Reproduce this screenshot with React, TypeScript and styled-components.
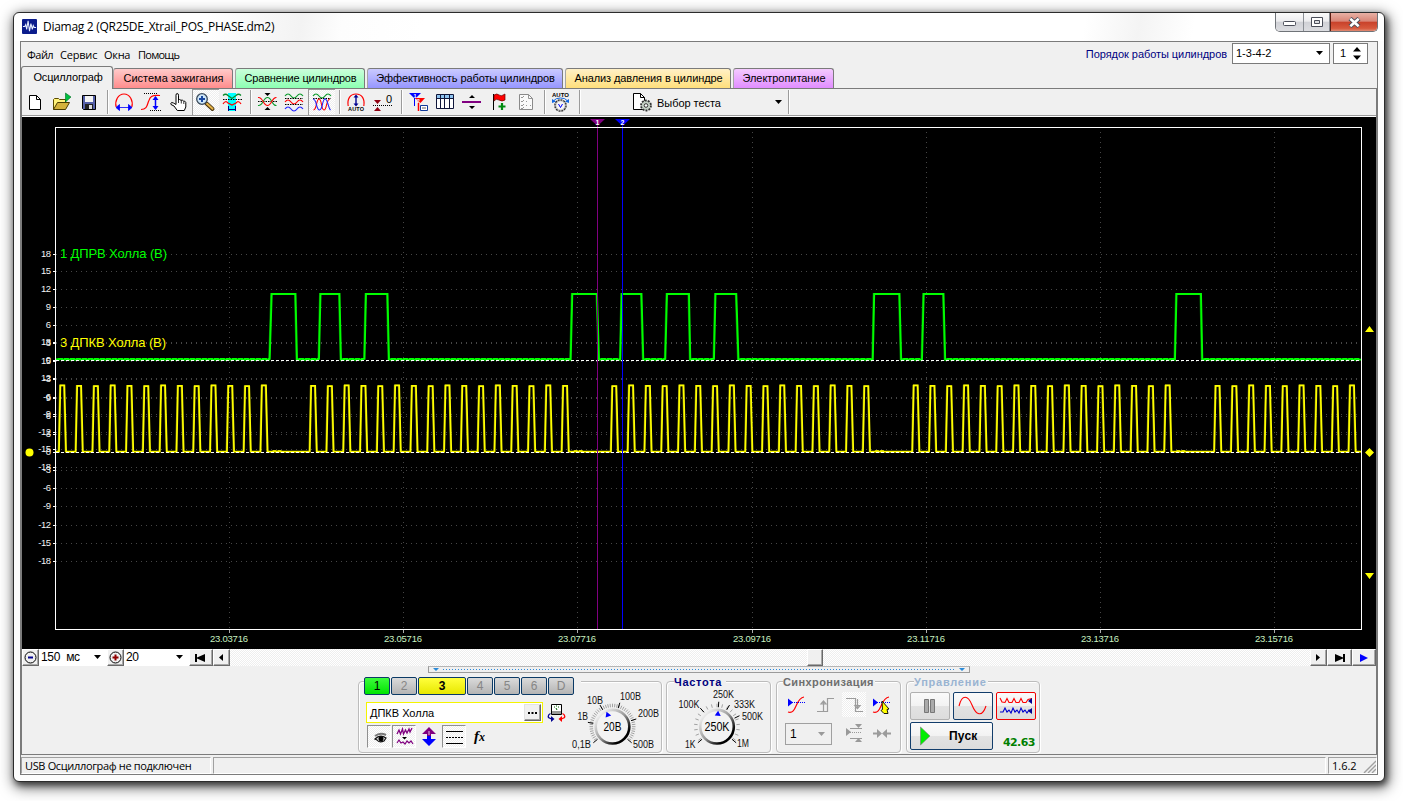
import React from "react";
import styled, { createGlobalStyle, css } from "styled-components";

const UI = `"Liberation Sans", Arial, sans-serif`;
const SEGOE = `"Open Sans", "Noto Sans", sans-serif`;
const dither = `repeating-conic-gradient(#ffffff 0 25%, #eeeeee 0 50%) 0 0 / 2px 2px`;

const Global = createGlobalStyle`
  html, body { margin: 0; padding: 0; background: #fff; }
  body { width: 1403px; height: 801px; overflow: hidden; font: 11px ${UI}; color: #000; }
  * { box-sizing: border-box; }
  svg { display: block; flex: none; }
  svg text { font-family: ${UI}; }
`;

/* ---------- window frame ---------- */

const Desktop = styled.div`
  width: 1403px;
  height: 801px;
  padding: 12px 18px 19px 13px;
  overflow: hidden;
`;

const WindowFrame = styled.div`
  width: 1372px;
  height: 770px;
  border: 1px solid #2c2c2c;
  border-radius: 6px;
  padding: 0 6px 6px;
  background: linear-gradient(100deg, #fff 0 14%, #f3f3f3 21%, #fdfdfd 24%, #fff 30% 78%, #f4f4f4 82%, #fff 86%) 0 0 / 100% 28px no-repeat,
    #fdfdfd;
  box-shadow: 2px 3px 6px rgba(0, 0, 0, 0.6), 2px 4px 14px 2px rgba(0, 0, 0, 0.55);
`;

const TitleBar = styled.header`
  display: flex;
  height: 28px;
  align-items: flex-start;
`;

const AppIcon = styled.div`
  margin: 6px 0 0 2px;
`;

const Title = styled.div`
  margin: 4px 0 0 6px;
  font: 12px/20px ${SEGOE};
  letter-spacing: -0.28px;
  white-space: nowrap;
  flex: 1;
`;

const CaptionButtons = styled.div`
  display: flex;
  width: 103px;
  height: 19px;
  border: 1px solid #6f7378;
  border-top: 0;
  border-radius: 0 0 5px 5px;
  overflow: hidden;
`;

const CaptionButton = styled.div<{ $w: number; $close?: boolean; $drop?: number }>`
  width: ${(p) => p.$w}px;
  display: flex;
  align-items: center;
  justify-content: center;
  padding-top: ${(p) => p.$drop ?? 0}px;
  border-left: ${(p) => (p.$close ? "1px solid #5c1d12" : "0")};
  border-right: ${(p) => (p.$close ? "0" : "1px solid #8b8f95")};
  background: ${(p) =>
    p.$close
      ? "linear-gradient(#e8b1a5 0, #d98576 46%, #c8412a 50%, #d7593d 85%, #e08a72 100%)"
      : "linear-gradient(#fbfbfb 0, #ececee 46%, #d0d1d6 50%, #dcdde1 100%)"};
`;

const Client = styled.div`
  width: 1358px;
  height: 734px;
  border: 1px solid #7b7b7b;
  background: #f0f0f0;
  display: flex;
  flex-direction: column;
`;

/* ---------- menu ---------- */

const MenuRow = styled.div`
  height: 24px;
  display: flex;
  align-items: flex-start;
  padding: 1px 9px 0 6px;
`;

const MenuItem = styled.span<{ $w: number; $ls?: number }>`
  width: ${(p) => p.$w}px;
  font: 11px/24px ${SEGOE};
  letter-spacing: ${(p) => p.$ls ?? 0}px;
  white-space: nowrap;
`;

const OrderLabel = styled.span`
  margin-left: auto;
  margin-right: 5px;
  line-height: 22px;
  letter-spacing: -0.05px;
  color: #000080;
`;

const Field = styled.div<{ $w: number; $h?: number; $muted?: boolean }>`
  width: ${(p) => p.$w}px;
  height: ${(p) => p.$h ?? 21}px;
  border: 1px solid ${(p) => (p.$muted ? "#a0a0a0" : "#7a7a7a")};
  background: ${(p) => (p.$muted ? "#f0f0f0" : "#fff")};
  display: flex;
  align-items: center;
  justify-content: space-between;
  padding: 0 6px 0 3px;
`;

const OrderField = styled(Field)`
  margin-right: 3px;
  padding-bottom: 1px;
`;

const SpinField = styled(Field)`
  padding: 0 6px 1px 6px;
`;

/* ---------- tabs ---------- */

const TabRow = styled.div`
  height: 22px;
  display: flex;
  align-items: flex-end;
`;

const Tab = styled.div<{ $w: number; $bg: string; $active?: boolean; $ls?: number }>`
  width: ${(p) => p.$w}px;
  height: ${(p) => (p.$active ? 23 : 20)}px;
  margin-bottom: ${(p) => (p.$active ? -1 : 0)}px;
  margin-right: ${(p) => (p.$active ? 0 : 2)}px;
  padding: ${(p) => (p.$active ? "1px 0 0 2px" : "0 0 0 1px")};
  border: 1px solid #7b7b7b;
  border-bottom: 0;
  border-left-color: ${(p) => (p.$active ? "#7b7b7b" : "#a5a5a5")};
  border-radius: 3px 3px 0 0;
  background: ${(p) => p.$bg};
  text-align: center;
  line-height: 19px;
  letter-spacing: ${(p) => p.$ls ?? 0}px;
  white-space: nowrap;
  z-index: 1;
`;

const Page = styled.main`
  height: 667px;
  border: 1px solid #7b7b7b;
  display: flex;
  flex-direction: column;
`;

/* ---------- toolbar ---------- */

const Toolbar = styled.div`
  height: 28px;
  display: flex;
  border-bottom: 1px solid #fff;
  box-shadow: inset 0 -1px #9b9b9b;
`;

const ToolButton = styled.div<{ $pressed?: boolean }>`
  width: 27px;
  height: 26px;
  padding: 3px;
  ${(p) =>
    p.$pressed &&
    css`
      background: ${dither};
      border-left: 1px solid #9a9a9a;
      border-top: 1px solid #9a9a9a;
      padding: 2px;
    `}
`;

const Separator = styled.div`
  width: 8px;
  height: 24px;
  margin-top: 1px;
  background: linear-gradient(90deg, transparent 4px, #9b9b9b 4px 5px, #fff 5px 6px, transparent 6px);
`;

const TestPicker = styled.div`
  width: 201px;
  height: 26px;
  display: flex;
  align-items: center;
  padding-left: 47px;
`;

const TestLabel = styled.span`
  width: 118px;
  padding-top: 1px;
  margin-left: 5px;
  letter-spacing: -0.05px;
`;

/* ---------- scroll row ---------- */

const NavRow = styled.div`
  height: 17px;
  display: flex;
`;

const Raised = styled.div<{ $w: number }>`
  width: ${(p) => p.$w}px;
  height: 17px;
  background: #f0f0f0;
  border: 1px solid #fff;
  border-right-color: #696969;
  border-bottom-color: #696969;
  box-shadow: inset -1px -1px #a8a8a8;
  display: flex;
  align-items: center;
  justify-content: center;
  padding-right: 1px;
`;

const Combo = styled.div<{ $w: number }>`
  width: ${(p) => p.$w}px;
  height: 17px;
  background: #fff;
  display: flex;
  align-items: center;
  justify-content: space-between;
  padding: 0 6px 1px 2px;
  font-size: 12px;
  letter-spacing: -0.3px;
  word-spacing: 3px;
`;

const Track = styled.div`
  flex: 1;
  background: ${dither};
  padding-left: 577px;
`;

/* ---------- control area ---------- */

const Controls = styled.section`
  height: 88px;
  background: #f0f0f0;
`;

const Splitter = styled.div`
  width: 542px;
  height: 7px;
  margin-left: 406px;
  border: 1px solid #9b9b9b;
  border-top-color: #b5b5b5;
`;

const Groups = styled.div`
  display: flex;
  margin: 8px 0 0 336px;
  height: 72px;
`;

const Group = styled.div<{ $w: number; $gap?: number }>`
  width: ${(p) => p.$w}px;
  height: 72px;
  margin-right: ${(p) => p.$gap ?? 5}px;
  border: 1px solid #bcbcbc;
  border-radius: 4px;
  box-shadow: 1px 1px #fff, inset 1px 1px #fff;
`;

const ChannelGroup = styled(Group)`
  display: flex;
`;

const GroupTitle = styled.div<{ $w: number; $x: number; $color: string; $ls: number }>`
  width: ${(p) => p.$w}px;
  height: 14px;
  margin: -7px 0 0 ${(p) => p.$x}px;
  background: #f0f0f0;
  color: ${(p) => p.$color};
  font: bold 11px/15px ${UI};
  letter-spacing: ${(p) => p.$ls}px;
  white-space: nowrap;
`;

const ChannelSide = styled.div`
  width: 211px;
`;

const ChannelStrip = styled.div`
  display: flex;
  gap: 1px;
  width: 217px;
  margin: -5px 0 0 5px;
  background: #f0f0f0;
`;

const tones = {
  green: ["linear-gradient(#3dfb3d, #00e400)", "#000"],
  yellow: ["linear-gradient(#ffff3c, #e8e800)", "#000"],
  gray: ["linear-gradient(#dadada, #b4b4b4)", "#868686"],
} as const;

const ChannelButton = styled.div<{ $w: number; $tone: keyof typeof tones; $bold?: boolean }>`
  width: ${(p) => p.$w}px;
  height: 18px;
  border: 1px solid #0b3a66;
  border-radius: 2px;
  background: ${(p) => tones[p.$tone][0]};
  color: ${(p) => tones[p.$tone][1]};
  font: ${(p) => (p.$bold ? "bold" : "normal")} 12px/16px ${UI};
  text-align: center;
`;

const NameRow = styled.div`
  display: flex;
  gap: 4px;
  margin: 7px 0 0 7px;
`;

const NameInput = styled.div`
  width: 177px;
  height: 21px;
  border: 1px solid #f4f400;
  background: #fff;
  display: flex;
  align-items: center;
  justify-content: space-between;
  padding: 0 1px 0 3px;
`;

const More = styled.div`
  width: 17px;
  height: 17px;
  background: #f0f0f0;
  border: 1px solid #e3e3e3;
  border-right-color: #696969;
  border-bottom-color: #696969;
  box-shadow: inset -1px -1px #a0a0a0;
  display: flex;
  align-items: center;
  justify-content: center;
`;

const ToggleRow = styled.div`
  display: flex;
  gap: 1px;
  margin: 2px 0 0 8px;
`;

const Toggle = styled.div<{ $on?: boolean }>`
  width: 24px;
  height: 23px;
  padding: ${(p) => (p.$on ? "0" : "1px")};
  ${(p) =>
    p.$on &&
    css`
      background: ${dither};
      border: 1px solid #8f8f8f;
      border-right-color: #fff;
      border-bottom-color: #fff;
    `}
`;

const Fx = styled.span`
  display: block;
  font: italic bold 15px/20px "Liberation Serif", serif;
  padding-left: 6px;
  small {
    font-size: 12px;
  }
`;

const DialArt = styled.svg<{ $lift?: boolean }>`
  margin-top: ${(p) => (p.$lift ? -7 : 0)}px;
`;

const SyncGrid = styled.div`
  display: grid;
  grid-template-columns: 29px 28px 28px 24px;
  margin: 3px 0 0 8px;
`;

const SyncCell = styled.div<{ $on?: boolean }>`
  height: 25px;
  width: 24px;
  background: ${(p) => (p.$on ? dither : "none")};
`;

const SyncRow = styled.div`
  display: flex;
  margin: 6px 0 0 8px;
`;

const SyncTools = styled.div`
  display: flex;
  gap: 4px;
  margin-left: 10px;
`;

const SyncField = styled(Field)`
  font-size: 12px;
  padding: 0 6px 1px 4px;
`;

const RunGrid = styled.div`
  display: grid;
  grid-template-columns: 40px 40px 40px;
  grid-template-rows: 28px 28px;
  gap: 2px 3px;
  margin: 3px 0 0 3px;
`;

const RunButton = styled.div<{ $edge: string; $wide?: boolean }>`
  grid-column: ${(p) => (p.$wide ? "span 2" : "auto")};
  border: 1px solid ${(p) => p.$edge};
  border-radius: 2px;
  background: linear-gradient(#fafafa 0, #f2f2f2 50%, #e2e2e2 52%, #dcdcdc 100%);
  display: flex;
  align-items: center;
  justify-content: ${(p) => (p.$wide ? "flex-start" : "center")};
`;

const RunLabel = styled.span`
  font: bold 12px/26px ${UI};
  letter-spacing: 0.2px;
  margin-left: 18px;
`;

const Rate = styled.span`
  font: bold 11px/14px "DejaVu Sans", sans-serif;
  letter-spacing: -0.6px;
  color: #008000;
  padding: 14px 0 0 7px;
`;

/* ---------- status bar ---------- */

const StatusBar = styled.footer`
  height: 19px;
  display: flex;
  padding-top: 2px;
  gap: 2px;
`;

const StatusCell = styled.div<{ $w?: number; $ls?: number }>`
  width: ${(p) => (p.$w ? `${p.$w}px` : "auto")};
  flex: ${(p) => (p.$w ? "none" : "1")};
  height: 17px;
  border: 1px solid #a0a0a0;
  border-right-color: #fff;
  border-bottom-color: #fff;
  padding-left: 3px;
  font: 11px/15px ${SEGOE};
  letter-spacing: ${(p) => p.$ls ?? 0}px;
  white-space: nowrap;
  display: flex;
  justify-content: space-between;
`;

/* ---------- small drawings ---------- */

const Caret = ({ color = "#000" }: { color?: string }) => (
  <svg width="7" height="4" viewBox="0 0 7 4">
    <path d="M0 0H7L3.5 4Z" fill={color} />
  </svg>
);

const Spin = () => (
  <svg width="8" height="13" viewBox="0 0 8 13">
    <path d="M0 4.500H8L4 0ZM0 8.500H8L4 13Z" />
  </svg>
);

const wave = (x: number, y: number, n: number, half: number, a: number) => {
  let d = `M${x} ${y}`;
  for (let i = 0; i < n; i++) d += `q${half / 2} ${i % 2 ? a : -a} ${half} 0`;
  return d;
};

const Icon = ({ children }: { children: React.ReactNode }) => (
  <svg width="21" height="21" viewBox="0 0 21 21" fill="none">
    {children}
  </svg>
);

const IconNew = () => (
  <Icon>
    <path d="M4.500 3.500h7l4 4v10h-11z" fill="#fff" stroke="#000" />
    <path d="M11.500 3.500v4h4" stroke="#000" />
  </Icon>
);

const IconOpen = () => (
  <Icon>
    <path d="M1.500 17.500v-10l1-1h4l1 1h6v3" fill="#fff27a" stroke="#5a4a00" />
    <path d="M1.500 17.500l4-7h12l-4 7z" fill="#d4b23c" stroke="#4a3c00" />
    <path d="M13.500 1l5.500 4-5.500 5z" fill="#00c040" stroke="#006b20" strokeWidth=".6" />
  </Icon>
);

const IconSave = () => (
  <Icon>
    <path d="M3.500 3.500h13v14h-12l-1-1z" fill="#5560a8" stroke="#000" />
    <path d="M6 4h8v6H6z" fill="#f4f4f4" />
    <path d="M6 12h8v5H6z" fill="#222" />
    <path d="M10 13h3v4h-3z" fill="#ddd" />
  </Icon>
);

const IconHorizontal = () => (
  <Icon>
    <path d="M2.200 15C.5 9 4 2 10 2s9.500 7 7.800 13" stroke="#f00" strokeWidth="1.200" />
    <path d="M3 15.500h14M5.500 12.500v6L2 15.500zM14.500 12.500v6l3.500-3z" stroke="#00f" fill="#00f" strokeWidth=".8" />
  </Icon>
);

const IconVertical = () => (
  <Icon>
    <path d="M3 1.500h13M9 18.500h11" stroke="#000" strokeDasharray="1 1" />
    <path d="M0 17.500c6 0 6-4 7.500-8S10 2.500 19 3.500" stroke="#f00" strokeWidth="1.200" />
    <path d="M14.500 5v12" stroke="#00f" strokeWidth="1.500" />
    <path d="M11.500 8h6l-3-4zM11.500 14h6l-3 4z" fill="#00f" />
  </Icon>
);

const IconHand = () => (
  <Icon>
    <path
      d="M8 12V3.200Q8 1.500 9.200 1.500T10.500 3.200V8l1-.5 1.500.8 1.300-.2 1.200 1 1.300.1 1 1.300v4.500l-1.500 3.500h-7L6 14 3 12.500q-.8-1.500.8-2 1.500.2 4.200 2z"
      fill="#fff"
      stroke="#000"
    />
    <path d="M10.500 8v3M13.300 8.500v3M15.800 9.500v2.500" stroke="#000" strokeWidth=".8" />
  </Icon>
);

const IconZoom = () => (
  <Icon>
    <path d="M11.500 11.500l6 5.500" stroke="#4a3510" strokeWidth="4" strokeLinecap="round" />
    <path d="M12 11.800l5.500 5" stroke="#e6b54a" strokeWidth="2" strokeLinecap="round" />
    <circle cx="7" cy="7" r="5.300" fill="#cfe8fb" stroke="#3b4a5a" strokeWidth="1.300" />
    <path d="M4 7h6M7 4v6" stroke="#1a48a0" strokeWidth="2" />
  </Icon>
);

const IconRange = () => (
  <Icon>
    <path d="M6 1h8v18H6z" fill="#0ff" />
    <path d="M1 3.500q2.500-2.500 5 0l4 3 4-3q2.500-2.500 5 0" stroke="#0a8a2a" strokeWidth="1.200" />
    <path d="M1 7.500h19" stroke="#000" strokeDasharray="1.500 1" />
    <path d="M1 12q2.500-4 5-1l4 2 4-2q2.500-3 5 1" stroke="#f00" strokeWidth="1.200" />
    <path d="M6.500 14v5M13.500 14v5M7 17.500h6" stroke="#000080" />
  </Icon>
);

const IconCenter = () => (
  <Icon>
    <path d="M7.500 1h6l-3 3zM7.500 18h6l-3-3z" fill="#000" />
    <path d="M1 9.500h19" stroke="#000" strokeDasharray="1.500 1" />
    <path d="M1 13.500c5 1 5-8 9.500-8s4.500 9 9 8" stroke="#0a9a2a" strokeWidth="1.100" />
    <path d="M1 5.500c5-1 5 8 9.500 8s4.500-9 9-8" stroke="#f00" strokeWidth="1.100" />
  </Icon>
);

const IconSeparate = () => (
  <Icon>
    <path d={wave(1, 4, 3, 6, 4)} stroke="#0a9a2a" strokeWidth="1.200" />
    <path d={wave(1, 10, 3, 6, 4)} stroke="#f00" strokeWidth="1.200" />
    <path d={wave(1, 17, 3, 6, 4)} stroke="#22f" strokeWidth="1.200" />
    <path d="M1 6.500h18M1 12.500h18" stroke="#000" strokeDasharray="1.500 1" />
  </Icon>
);

const IconOverlay = () => (
  <Icon>
    <path d={wave(2, 4, 3, 6, 4)} stroke="#0a9a2a" strokeWidth="1.200" />
    <path d="M2 6.500h18" stroke="#000" strokeDasharray="1.500 1" />
    <path d="M2.500 18C6 18 5 7 8 7s2 11 5 11 2-11 6-11" stroke="#f00" strokeWidth="1.100" />
    <path d="M2 7c4 0 3 11 6.500 11S11 7 14 7s3 9 5.500 11" stroke="#22f" strokeWidth="1.100" />
  </Icon>
);

const IconAutoScale = () => (
  <Icon>
    <path d="M2.200 14C1 7 4 2 10 2s9 5 7.800 12" stroke="#f00" strokeWidth="1.200" />
    <path d="M10 4v9" stroke="#000090" strokeWidth="1.400" />
    <path d="M7.500 5.500h5L10 2.500zM7.500 11.500h5l-2.500 3z" fill="#000090" />
    <text x="2" y="19.300" fontSize="5.500" fontWeight="bold" fill="#000" textLength="16">AUTO</text>
  </Icon>
);

const IconZero = () => (
  <Icon>
    <path d="M1 8h7l-3.500 4zM1 19h7l-3.500-4z" fill="#900010" />
    <path d="M0 13.500h20" stroke="#000" strokeDasharray="1 1" />
    <text x="13" y="11" fontSize="11" fill="#000">0</text>
  </Icon>
);

const IconMarkers = () => (
  <Icon>
    <path d="M1 1h12l-6 6z" fill="#00f" />
    <path d="M6.500 5v9" stroke="#00f" />
    <path d="M7 6h10l-4.500 5z" fill="#f00" />
    <path d="M10.500 9v10" stroke="#f00" strokeWidth="1.500" />
    <path d="M12.500 13.500h7v5h-7z" fill="#fff" stroke="#113a9a" />
    <path d="M14 16h4" stroke="#666" />
    <text x="5.500" y="6" fontSize="5.500" fontWeight="bold" fill="#fff">1</text>
    <text x="9" y="10.500" fontSize="5" fontWeight="bold" fill="#fff">2</text>
  </Icon>
);

const IconTable = () => (
  <Icon>
    <path d="M1.500 2.500h17v14h-17z" fill="#fff" stroke="#10163a" />
    <path d="M2 3h16v3H2z" fill="#8fc4f0" />
    <path d="M2 6.500h16M5.500 3v13M9.500 3v13M14.500 3v13" stroke="#10163a" />
  </Icon>
);

const IconLevel = () => (
  <Icon>
    <path d="M7 6h6l-3-3zM7 14h6l-3 3z" fill="#000" />
    <path d="M0 9h19v2H0z" fill="#800080" />
  </Icon>
);

const IconFlag = () => (
  <Icon>
    <path d="M4.500 2v16" stroke="#000" />
    <path d="M5 3q3-2 5 0t6-1v6q-3 2-6 0T5 9z" fill="#f00" stroke="#600" strokeWidth=".7" />
    <path d="M13 11v7M9.500 14.500h7" stroke="#008a10" strokeWidth="2.200" />
  </Icon>
);

const IconChecklist = () => (
  <Icon>
    <path d="M3.500 2.500h9l4 4v11h-13z" fill="#fafafa" stroke="#8a8a8a" />
    <path d="M12.500 2.500v4h4M5 5l1 1 2-2M5 9l1 1 2-2M5 13l1 1 2-2M5 16l1 1 2-2" stroke="#8a8a8a" strokeWidth=".9" />
    <path d="M10 9.500h1M10 13.500h1M14 13.500h1" stroke="#999" />
  </Icon>
);

const IconAutoVolt = () => (
  <Icon>
    <text x="1" y="5" fontSize="6" fontWeight="bold" fill="#000" textLength="17">AUTO</text>
    <circle cx="9.500" cy="13.500" r="5.500" fill="#fff" stroke="#333" strokeWidth="1.600" strokeDasharray="2 .8" />
    <circle cx="9.500" cy="13.500" r="4.800" fill="#f4f4f4" stroke="#777" strokeWidth=".6" />
    <path d="M7.500 12l2 3.500 2-3.500" stroke="#00f" />
    <path d="M3 8.500q1.500-2.500 6.500-2.500T16 8.500" stroke="#1468e0" />
    <path d="M1 7v4l4-1.500zM18 7v4l-4-1.500z" fill="#1468e0" />
  </Icon>
);

const IconTest = () => (
  <svg width="22" height="21" viewBox="0 0 22 21" fill="none">
    <path d="M3.500 1.500h7l4 4v12h-11z" fill="#fff" stroke="#000" />
    <path d="M10.500 1.500v4h4" stroke="#000" />
    <circle cx="16" cy="13.500" r="5" fill="#c4d0c4" stroke="#333" strokeWidth="1.800" strokeDasharray="2 1.100" />
    <circle cx="16" cy="13.500" r="1.800" fill="#fff" stroke="#333" />
  </svg>
);

/* ---------- oscilloscope ---------- */

const GREEN_PULSES = [
  [269.7, 271.7, 295.5, 297],
  [319, 320.5, 339.5, 341],
  [364.5, 366, 387.5, 389],
  [570.7, 572.3, 597, 599],
  [620.3, 621.8, 641.5, 643.3],
  [665.3, 667, 689, 690.3],
  [714, 715.5, 736.3, 738.5],
  [872.8, 874.2, 899.5, 901.2],
  [922, 923.7, 943.5, 945.2],
  [1175, 1176.5, 1201, 1202.3],
];

const YELLOW_GROUPS: [number, number][] = [
  [62.4, 13],
  [313.2, 16],
  [614.4, 16],
  [915.8, 16],
  [1217.7, 9],
];

const greenPath = (() => {
  let d = "M56 359.500";
  let x = 56;
  const ripple = (to: number) => {
    let up = false;
    while (x + 3 < to) {
      x += 3;
      up = !up;
      d += `H${x}V${up ? 358.9 : 359.6}`;
    }
    d += `H${to}`;
  };
  for (const [a, b, c, e] of GREEN_PULSES) {
    ripple(a);
    d += `L${b} 294H${c}L${e} 359.500`;
    x = e;
  }
  ripple(1361);
  return d;
})();

const yellowPath = (() => {
  let d = "M56 451.700";
  let n = 0;
  for (const [start, count] of YELLOW_GROUPS) {
    for (let i = 0; i < count; i++, n++) {
      const c = start + i * 16.8;
      const top = 385.4 + (n % 3) * 0.4;
      d += `H${c - 3.4}L${c - 2} ${top}H${c + 2}L${c + 3.7} 451.700`;
    }
    if (start < 1200) d += `h6v-.7h2v.7h3v-.7h2v.7`;
  }
  return d + "H1361";
})();

const V_LINES = [229, 403, 577, 752, 926, 1100, 1274];
const TIMES = ["23.03716", "23.05716", "23.07716", "23.09716", "23.11716", "23.13716", "23.15716"];
const CH1 = [254, 271, 289, 307, 325, 343, 360, 379, 397, 414, 432, 449, 467];
const CH3 = [342, 361, 378, 398, 416, 434, 452, 470, 488, 506, 525, 543, 561];
const VALUES = [18, 15, 12, 9, 6, 3, 0, -3, -6, -9, -12, -15, -18];

const Scope = () => (
  <svg width="1354" height="532" viewBox="22 117 1354 532" fill="none">
    <rect x="22" y="117" width="1354" height="532" fill="#000" />
    <g stroke="#464646" strokeDasharray="1 4" shapeRendering="crispEdges">
      {V_LINES.map((x) => (
        <path key={x} d={`M${x + 0.5} 127V629`} />
      ))}
      {[...CH1, ...CH3].map((y, i) => (
        <path key={i} d={`M56 ${y + 0.5}H1361`} />
      ))}
    </g>
    <path d={greenPath} stroke="#007a00" strokeWidth="1.800" transform="translate(-.6 0)" />
    <path d={greenPath} stroke="#00ff00" strokeWidth="1.900" />
    <path d={yellowPath} stroke="#8a8a00" strokeWidth="1.500" transform="translate(-.6 0)" />
    <path d={yellowPath} stroke="#ffff00" strokeWidth="1.700" />
    <path d="M56 360.500H1361M56 452.500H1361" stroke="#fff" strokeDasharray="3 2" shapeRendering="crispEdges" />
    <g shapeRendering="crispEdges">
      <path d="M597.500 126V629" stroke="#800080" />
      <path d="M622.500 126V629" stroke="#00f" />
      <path d="M55.500 127.500H1361.500V629.500H55.500Z" stroke="#fff" />
      {V_LINES.map((x) => (
        <path key={x} d={`M${x + 0.5} 630v3`} stroke="#aaa" />
      ))}
      {[...CH1, ...CH3].map((y, i) => (
        <path key={i} d={`M53 ${y + 0.5}h2`} stroke="#fff" />
      ))}
    </g>
    <path d="M590 119h15l-7.500 7z" fill="#800080" />
    <path d="M615 119h15l-7.500 7z" fill="#00f" />
    <text x="597.500" y="125" fontSize="7" fontWeight="bold" fill="#fff" textAnchor="middle">1</text>
    <text x="622.500" y="125" fontSize="7" fontWeight="bold" fill="#fff" textAnchor="middle">2</text>
    <g fontSize="9.500" letterSpacing="-.5" fill="#f4f4f4" textAnchor="end">
      {VALUES.map((v, i) => (
        <text key={`a${v}`} x="50.500" y={CH1[i] + 3}>{v}</text>
      ))}
      {VALUES.map((v, i) => (
        <text key={`b${v}`} x="50.500" y={CH3[i] + 3}>{v}</text>
      ))}
    </g>
    <g fontSize="9.500" fill="#c8f0c0">
      {V_LINES.map((x, i) => (
        <text key={x} x={x - 19} y="642" textLength="38">{TIMES[i]}</text>
      ))}
    </g>
    <text x="60" y="258" fontSize="13" fill="#0f0" textLength="107">1 ДПРВ Холла (В)</text>
    <text x="60" y="347" fontSize="13" fill="#ff0" textLength="106">3 ДПКВ Холла (В)</text>
    <g fill="#ff0">
      <circle cx="29.500" cy="452.500" r="4" />
      <path d="M1365 332h9l-4.500-6zM1365 573h9l-4.500 6zM1369.500 448l4.500 4.500-4.500 4.500-4.500-4.500z" />
    </g>
  </svg>
);

/* ---------- dials ---------- */

type Mark = [string, number, number, number];

const Dial = ({
  cx,
  value,
  valueW,
  marks,
  majors,
  pointer,
  step,
  box,
  lift,
}: {
  cx: number;
  value: string;
  valueW: number;
  marks: Mark[];
  majors: number[];
  pointer: number;
  step: number;
  box: [number, number];
  lift?: boolean;
}) => {
  const cy = 726.7;
  const ray = (deg: number, r1: number, r2: number) => {
    const s = Math.sin((deg * Math.PI) / 180);
    const c = -Math.cos((deg * Math.PI) / 180);
    return `M${cx + s * r1} ${cy + c * r1}L${cx + s * r2} ${cy + c * r2}`;
  };
  const minor: number[] = [];
  for (let a = -126; a <= 126; a += step) minor.push(a);
  return (
    <DialArt $lift={lift} width={box[1]} height="70" viewBox={`${box[0]} 682 ${box[1]} 70`} fill="none">
      <defs>
        <linearGradient id={`rim${Math.round(cx)}`} x1="0" y1="0" x2="1" y2="1">
          <stop offset=".1" stopColor="#f4f4f4" />
          <stop offset=".5" stopColor="#999" />
          <stop offset=".8" stopColor="#000" />
        </linearGradient>
      </defs>
      <path d={minor.map((a) => ray(a, 19.5, 23)).join("")} stroke="#999" strokeWidth=".9" />
      <path d={majors.map((a) => ray(a, 19.5, 25)).join("")} stroke="#000" strokeWidth="1" />
      <circle cx={cx} cy={cy} r="16.800" fill="#f3f3f3" stroke={`url(#rim${Math.round(cx)})`} strokeWidth="2.600" />
      <path d="M-3 -11L0 -16L3 -11Z" fill="#00f" transform={`translate(${cx} ${cy}) rotate(${pointer})`} />
      <text x={cx - valueW / 2} y="731" fontSize="12" fill="#000" textLength={valueW} lengthAdjust="spacingAndGlyphs">
        {value}
      </text>
      {marks.map(([t, x, y, w]) => (
        <text key={t} x={x} y={y} fontSize="10" fill="#111" textLength={w} lengthAdjust="spacingAndGlyphs">
          {t}
        </text>
      ))}
    </DialArt>
  );
};

/* ---------- sync icons ---------- */

const SyncStart = ({ hand }: { hand?: boolean }) => (
  <svg width="24" height="25" viewBox="0 0 24 25" fill="none">
    <path d="M3 20c9 3 7-14 16-15" stroke="#f00" strokeWidth="1.200" />
    <path d="M3 10.500h17" stroke="#00f" strokeDasharray="1 1" />
    <path d="M3 6.500v8l5-4z" fill="#00f" />
    {hand && <path d="M12 9l7 8-2 .5 1 4h-4l-3-3 1.500-1z" fill="#ff0" stroke="#000" strokeWidth=".9" />}
  </svg>
);

const SyncEdge = ({ falling }: { falling?: boolean }) => (
  <svg width="24" height="25" viewBox="0 0 24 25" fill="none" stroke="#9c9c9c" strokeWidth="1.200">
    {falling ? (
      <path d="M4 6.500h9.500v13H21M15.500 7v9M13 13.500l2.500 3 2.500-3z" />
    ) : (
      <path d="M3 19.500h10.500v-13H20M9.500 19V9M7 12l2.500-3 2.500 3z" />
    )}
  </svg>
);

const AppGlyph = () => (
  <svg width="15" height="15" viewBox="0 0 16 16" fill="none">
    <rect width="16" height="16" rx="1" fill="#0b1c8c" />
    <path d="M1 8h2l1-2 1 5L6.500 2 8 13l1.500-8L11 11l1-4 1 2h2" stroke="#e8f0ff" strokeWidth="1.100" />
  </svg>
);

const tools: (React.FC | "sep" | [React.FC])[] = [
  IconNew, IconOpen, IconSave, "sep",
  IconHorizontal, IconVertical, IconHand, [IconZoom], IconRange, "sep",
  IconCenter, IconSeparate, [IconOverlay], "sep",
  IconAutoScale, IconZero, "sep",
  IconMarkers, IconTable, IconLevel, IconFlag, IconChecklist, "sep",
  IconAutoVolt, "sep",
];

export default function App() {
  return (
    <Desktop>
      <Global />
      <WindowFrame>
        <TitleBar>
          <AppIcon>
            <AppGlyph />
          </AppIcon>
          <Title>Diamag 2 (QR25DE_Xtrail_POS_PHASE.dm2)</Title>
          <CaptionButtons>
            <CaptionButton $w={28} $drop={4}>
              <svg width="13" height="6" viewBox="0 0 13 6"><rect x=".5" y=".5" width="12" height="4" rx="1" fill="#fff" stroke="#4a4d58" /></svg>
            </CaptionButton>
            <CaptionButton $w={27}>
              <svg width="12" height="10" viewBox="0 0 12 10"><path d="M.5 .5h11v9H.5z" fill="#fff" stroke="#4a4d58" /><path d="M3.500 3.500h5v3h-5z" fill="#dcdde1" stroke="#4a4d58" /></svg>
            </CaptionButton>
            <CaptionButton $w={47} $close>
              <svg width="13" height="11" viewBox="0 0 13 11"><path d="M2 1.500l9 8M11 1.500l-9 8" stroke="#4a4d58" strokeWidth="4.400" /><path d="M2.300 1.800l8.400 7.400M10.700 1.800L2.300 9.200" stroke="#fff" strokeWidth="2.600" /></svg>
            </CaptionButton>
          </CaptionButtons>
        </TitleBar>
        <Client>
          <MenuRow>
            <MenuItem $w={33} $ls={-0.5}>Файл</MenuItem>
            <MenuItem $w={44} $ls={-0.2}>Сервис</MenuItem>
            <MenuItem $w={34} $ls={-0.3}>Окна</MenuItem>
            <MenuItem $w={50} $ls={-0.75}>Помощь</MenuItem>
            <OrderLabel>Порядок работы цилиндров</OrderLabel>
            <OrderField $w={98}>1-3-4-2<Caret /></OrderField>
            <SpinField $w={35}>1<Spin /></SpinField>
          </MenuRow>
          <TabRow>
            <Tab $w={92} $active $bg="#f0f0f0" $ls={-0.15}>Осциллограф</Tab>
            <Tab $w={120} $bg="linear-gradient(#ffcaca, #ff8d8d)">Система зажигания</Tab>
            <Tab $w={130} $bg="linear-gradient(#caffdb, #8dffb2)" $ls={-0.17}>Сравнение цилиндров</Tab>
            <Tab $w={196} $bg="linear-gradient(#cacaff, #9696ff)" $ls={-0.1}>Эффективность работы цилиндров</Tab>
            <Tab $w={166} $bg="linear-gradient(#fff0c6, #ffdf7c)" $ls={-0.1}>Анализ давления в цилиндре</Tab>
            <Tab $w={101} $bg="linear-gradient(#f4caff, #e18dff)" $ls={-0.05}>Электропитание</Tab>
          </TabRow>
          <Page>
            <Toolbar>
              {tools.map((t, i) => {
                if (t === "sep") return <Separator key={i} />;
                const pressed = Array.isArray(t);
                const Glyph = (pressed ? (t as [React.FC])[0] : t) as React.FC;
                return (
                  <ToolButton key={i} $pressed={pressed}>
                    <Glyph />
                  </ToolButton>
                );
              })}
              <TestPicker>
                <IconTest />
                <TestLabel>Выбор теста</TestLabel>
                <Caret />
              </TestPicker>
              <Separator />
            </Toolbar>
            <Scope />
            <NavRow>
              <Raised $w={17}>
                <svg width="13" height="13" viewBox="0 0 13 13"><circle cx="6.500" cy="6.500" r="5.500" fill="none" stroke="#000" /><path d="M4 5.500h5v2H4z" fill="#000090" /></svg>
              </Raised>
              <Combo $w={68}>150 мс<Caret /></Combo>
              <Raised $w={17}>
                <svg width="13" height="13" viewBox="0 0 13 13"><circle cx="6.500" cy="6.500" r="5.500" fill="none" stroke="#000" /><path d="M3.500 5.500h2v-2h2v2h2v2h-2v2h-2v-2h-2z" fill="#900000" /></svg>
              </Raised>
              <Combo $w={65}>20<Caret /></Combo>
              <Raised $w={24}>
                <svg width="11" height="8" viewBox="0 0 11 8"><path d="M0 0h2v3.500L10 0v8L2 4.500V8H0z" /></svg>
              </Raised>
              <Raised $w={17}>
                <svg width="4" height="7" viewBox="0 0 4 7"><path d="M4 0v7L0 3.500z" /></svg>
              </Raised>
              <Track>
                <Raised $w={16} />
              </Track>
              <Raised $w={17}>
                <svg width="4" height="7" viewBox="0 0 4 7"><path d="M0 0v7l4-3.500z" /></svg>
              </Raised>
              <Raised $w={25}>
                <svg width="11" height="8" viewBox="0 0 11 8"><path d="M11 0H9v3.500L1 0v8l8-3.500V8h2z" /></svg>
              </Raised>
              <Raised $w={24}>
                <svg width="8" height="8" viewBox="0 0 8 8"><path d="M0 0v8l8-4z" fill="#00f" /></svg>
              </Raised>
            </NavRow>
            <Controls>
              <Splitter>
                <svg width="540" height="5" viewBox="0 0 540 5">
                  <path d="M4 1h6l-3 3zM530 1h6l-3 3z" fill="#2a8ad8" />
                  <path d="M14 2.500H526" stroke="#2a8ade" strokeDasharray="1 2" shapeRendering="crispEdges" />
                </svg>
              </Splitter>
              <Groups>
                <ChannelGroup $w={304} $gap={4}>
                  <ChannelSide>
                    <ChannelStrip>
                      <ChannelButton $w={26} $tone="green">1</ChannelButton>
                      <ChannelButton $w={26} $tone="gray">2</ChannelButton>
                      <ChannelButton $w={48} $tone="yellow" $bold>3</ChannelButton>
                      <ChannelButton $w={26} $tone="gray">4</ChannelButton>
                      <ChannelButton $w={26} $tone="gray">5</ChannelButton>
                      <ChannelButton $w={26} $tone="gray">6</ChannelButton>
                      <ChannelButton $w={26} $tone="gray">D</ChannelButton>
                    </ChannelStrip>
                    <NameRow>
                      <NameInput>
                        ДПКВ Холла
                        <More>
                          <svg width="9" height="2" viewBox="0 0 9 2"><path d="M0 0h2v2H0zM3.500 0h2v2h-2zM7 0h2v2H7z" /></svg>
                        </More>
                      </NameInput>
                      <svg width="19" height="20" viewBox="0 0 19 20" fill="none">
                        <path d="M4.500 2.500h10v10h-10z" fill="#fff" stroke="#000" />
                        <path d="M5 9h9v3H5z" fill="#999" />
                        <path d="M7 5h1M9 4h1M11 5h1M9 6l1 2" stroke="#060" />
                        <path d="M3.500 11.500q-3 1.500-2 4l3 1.500" stroke="#000090" strokeWidth="1.300" />
                        <path d="M4 14l3.500 3L4 20z" fill="#000090" />
                        <path d="M15.500 11.500q3 1.500 2 4l-3 1.500" stroke="#f00" strokeWidth="1.300" />
                        <path d="M15 14l-3.500 3 3.500 3z" fill="#f00" />
                      </svg>
                    </NameRow>
                    <ToggleRow>
                      <Toggle $on>
                        <svg width="22" height="21" viewBox="0 0 22 21" fill="none">
                          <path d="M7 10q5-4 11-1" stroke="#777" strokeWidth="2" />
                          <path d="M7 13q5-5 11-1l-2 3q-5 2-7-1z" fill="#ddd" stroke="#111" strokeWidth="1.200" />
                          <circle cx="13" cy="12.700" r="2.500" fill="#000" />
                        </svg>
                      </Toggle>
                      <Toggle $on>
                        <svg width="22" height="21" viewBox="0 0 22 21" fill="none" stroke="#800080">
                          <path d="M4 8l2-4 1.500 4 2-5 1 5 2-4 1.500 3 2-4 1 3 2-4" strokeWidth="1.300" />
                          <path d="M4 17l2-3 2 3 2-1 2 2 2-3 2 2 2-2 2 3" strokeWidth="1.200" />
                          <path d="M9 11h5l-2.500 2.500z" fill="#000" stroke="none" />
                        </svg>
                      </Toggle>
                      <Toggle>
                        <svg width="22" height="21" viewBox="0 0 22 21">
                          <path d="M11 1l7 7h-5v3H9V8H4z" fill="#800080" />
                          <path d="M11 20l7-7h-5v-3H9v3H4z" fill="#00f" />
                          <path d="M10.500 5h1v4h-1z" fill="#e8c8e8" />
                        </svg>
                      </Toggle>
                      <Toggle $on>
                        <svg width="22" height="21" viewBox="0 0 22 21">
                          <path d="M3 5.500h17M3 17.500h17" stroke="#000" />
                          <path d="M3 11.500h17" stroke="#000" strokeDasharray="2 1" />
                        </svg>
                      </Toggle>
                      <Toggle>
                        <Fx>f<small>x</small></Fx>
                      </Toggle>
                    </ToggleRow>
                  </ChannelSide>
                  <Dial
                    cx={612.5}
                    value="20В"
                    valueW={18}
                    box={[570, 91]}
                    step={6}
                    pointer={-22}
                    majors={[-130, -80, -30, 17, 72, 130]}
                    marks={[
                      ["0,1В", 572, 748, 19],
                      ["1В", 577.5, 720, 10.5],
                      ["10В", 587, 703.5, 16],
                      ["100В", 620, 700, 21],
                      ["200В", 638, 717, 21],
                      ["500В", 633, 748, 21],
                    ]}
                  />
                </ChannelGroup>
                <Group $w={105}>
                  <GroupTitle $w={52} $x={7} $color="#000080" $ls={0.7}>Частота</GroupTitle>
                  <Dial
                    cx={717}
                    value="250K"
                    valueW={25}
                    box={[667, 103]}
                    lift
                    step={14}
                    pointer={4}
                    majors={[-130, -42, 4, 30, 64, 130]}
                    marks={[
                      ["100K", 678.5, 708, 21],
                      ["250K", 713, 698, 21],
                      ["333K", 734, 708, 21],
                      ["500K", 742, 720, 21],
                      ["1K", 685, 748, 10.5],
                      ["1M", 737, 747, 12],
                    ]}
                  />
                </Group>
                <Group $w={125}>
                  <GroupTitle $w={92} $x={6} $color="#6e6e6e" $ls={0.4}>Синхронизация</GroupTitle>
                  <SyncGrid>
                    <SyncCell><SyncStart /></SyncCell>
                    <SyncCell><SyncEdge /></SyncCell>
                    <SyncCell $on><SyncEdge falling /></SyncCell>
                    <SyncCell><SyncStart hand /></SyncCell>
                  </SyncGrid>
                  <SyncRow>
                    <SyncField $w={47} $h={22} $muted>1<Caret color="#999" /></SyncField>
                    <SyncTools>
                      <svg width="24" height="20" viewBox="0 0 24 20" fill="none">
                        <path d="M4 5v8l5-4z" fill="#999" />
                        <path d="M8 5.500h12M8 15.500h12" stroke="#999" />
                        <path d="M8 9.500h12" stroke="#999" strokeDasharray="1 1" />
                        <path d="M13 1h7l-3.500 4zM13 19h7l-3.500-4z" fill="#999" />
                      </svg>
                      <svg width="24" height="20" viewBox="0 0 24 20" fill="#9c9c9c">
                        <path d="M3 9.500h4V6l5 4.500L7 15v-3.500H3zM21 9.500h-4V6l-5 4.500 5 4.500v-3.500h4z" />
                      </svg>
                    </SyncTools>
                  </SyncRow>
                </Group>
                <Group $w={134}>
                  <GroupTitle $w={74} $x={7} $color="#9ab4d2" $ls={0.75}>Управление</GroupTitle>
                  <RunGrid>
                    <RunButton $edge="#b0b0b0">
                      <svg width="12" height="16" viewBox="0 0 12 16"><path d="M.5 1.500h4v13h-4zM6.500 1.500h4v13h-4z" fill="#aaa" stroke="#777" /></svg>
                    </RunButton>
                    <RunButton $edge="#123d6b">
                      <svg width="30" height="20" viewBox="0 0 30 20" fill="none"><path d="M1 10C4-2 10-1 14 9s10 13 14 1" stroke="#f00" strokeWidth="1.100" /></svg>
                    </RunButton>
                    <RunButton $edge="#f00000">
                      <svg width="34" height="20" viewBox="0 0 34 20" fill="none">
                        <path d="M1 2l2 4 3 .500 2-4 2 4 3 0 2-4 2 4 3 0 2-4 2 4 3 0 2-3 4-1" stroke="#f00" strokeWidth="1.100" />
                        <path d="M1 16l3 0 2-4 2 4 2-2 2 3 2-5 2 4 2-2 2 3 2-5 2 4 2-2 2 3 2-3 2 1" stroke="#00c" strokeWidth="1.100" />
                        <path d="M33 2v6l-4-3zM33 12v6l-4-3z" fill="#000090" />
                      </svg>
                    </RunButton>
                    <RunButton $edge="#123d6b" $wide>
                      <svg width="20" height="20" viewBox="0 0 20 20"><path d="M9.500 1v18L19 10z" fill="#00ee00" stroke="#777" strokeWidth=".6" /></svg>
                      <RunLabel>Пуск</RunLabel>
                    </RunButton>
                    <Rate>42.63</Rate>
                  </RunGrid>
                </Group>
              </Groups>
            </Controls>
          </Page>
          <StatusBar>
            <StatusCell $w={190} $ls={-0.34}>USB Осциллограф не подключен</StatusCell>
            <StatusCell />
            <StatusCell $w={49}>
              1.6.2
              <svg width="13" height="15" viewBox="0 0 13 15"><path d="M1 15L13 3M5 15l8-8M9 15l4-4" stroke="#a0a0a0" strokeWidth="1.400" /></svg>
            </StatusCell>
          </StatusBar>
        </Client>
      </WindowFrame>
    </Desktop>
  );
}
